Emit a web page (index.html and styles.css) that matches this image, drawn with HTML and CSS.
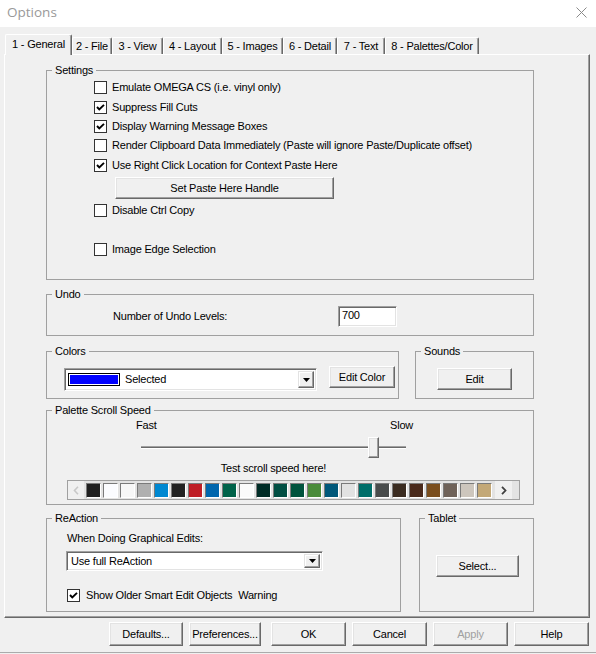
FILE: index.html
```html
<!DOCTYPE html>
<html>
<head>
<meta charset="utf-8">
<title>Options</title>
<link rel="stylesheet" href="styles.css">
</head>
<body>
<div class="window">
  <div class="titlebar">
    <span class="title">Options</span>
    <svg class="close" viewBox="0 0 11 11"><path d="M0.5 0.5 L10.5 10.5 M10.5 0.5 L0.5 10.5" stroke="#8a8a8a" stroke-width="1" fill="none"/></svg>
  </div>
  <div class="tabs">
    <div class="tab active">1 - General</div>
    <div class="tab">2 - File</div>
    <div class="tab">3 - View</div>
    <div class="tab">4 - Layout</div>
    <div class="tab">5 - Images</div>
    <div class="tab">6 - Detail</div>
    <div class="tab">7 - Text</div>
    <div class="tab">8 - Palettes/Color</div>
  </div>
  <div class="panel">
    <fieldset class="group settings">
      <legend>Settings</legend>
      <div class="settings-body">
        <div class="cb-row r1"><span class="cb"></span><span>Emulate OMEGA CS (i.e. vinyl only)</span></div>
        <div class="cb-row r2"><span class="cb"><svg viewBox="0 0 11 11"><path d="M2 5 L4.3 7.5 L9 2.8" stroke="#000" stroke-width="1.9" fill="none"/></svg></span><span>Suppress Fill Cuts</span></div>
        <div class="cb-row r3"><span class="cb"><svg viewBox="0 0 11 11"><path d="M2 5 L4.3 7.5 L9 2.8" stroke="#000" stroke-width="1.9" fill="none"/></svg></span><span>Display Warning Message Boxes</span></div>
        <div class="cb-row r4"><span class="cb"></span><span>Render Clipboard Data Immediately (Paste will ignore Paste/Duplicate offset)</span></div>
        <div class="cb-row r5"><span class="cb"><svg viewBox="0 0 11 11"><path d="M2 5 L4.3 7.5 L9 2.8" stroke="#000" stroke-width="1.9" fill="none"/></svg></span><span>Use Right Click Location for Context Paste Here</span></div>
        <button class="btn paste-btn">Set Paste Here Handle</button>
        <div class="cb-row r6"><span class="cb"></span><span>Disable Ctrl Copy</span></div>
        <div class="cb-row r7"><span class="cb"></span><span>Image Edge Selection</span></div>
      </div>
    </fieldset>

    <fieldset class="group undo">
      <legend>Undo</legend>
      <div class="undo-row">
        <span class="undo-label">Number of Undo Levels:</span>
        <div class="textbox">700</div>
      </div>
    </fieldset>

    <div class="group-row colors-row">
      <fieldset class="group colors">
        <legend>Colors</legend>
        <div class="colors-body">
          <div class="combo color-combo">
            <span class="sel-swatch"><span class="sel-fill"></span></span>
            <span class="combo-text">Selected</span>
            <span class="drop"><svg viewBox="0 0 7 4"><polygon points="0,0 7,0 3.5,4" fill="#000"/></svg></span>
          </div>
          <button class="btn edit-color">Edit Color</button>
        </div>
      </fieldset>
      <fieldset class="group sounds">
        <legend>Sounds</legend>
        <div class="sounds-body">
          <button class="btn edit-btn">Edit</button>
        </div>
      </fieldset>
    </div>

    <fieldset class="group palette">
      <legend>Palette Scroll Speed</legend>
      <div class="speed-labels"><span class="fast">Fast</span><span>Slow</span></div>
      <div class="slider"><div class="track"></div><div class="thumb"></div></div>
      <div class="test-text">Test scroll speed here!</div>
      <div class="strip">
        <span class="arrow left"><svg viewBox="0 0 6 9"><polyline points="5,0.8 1.5,4.5 5,8.2" stroke="#c8c8c8" stroke-width="1.6" fill="none"/></svg></span>
        <span class="sw" style="background:#202020"></span>
        <span class="sw" style="background:#fbfcff"></span>
        <span class="sw" style="background:#f7f7f7"></span>
        <span class="sw" style="background:#b0b0b0"></span>
        <span class="sw" style="background:#0088d1"></span>
        <span class="sw" style="background:#222222"></span>
        <span class="sw" style="background:#bf1e26"></span>
        <span class="sw" style="background:#0066ad"></span>
        <span class="sw" style="background:#00634a"></span>
        <span class="sw" style="background:#fafafa"></span>
        <span class="sw" style="background:#002c26"></span>
        <span class="sw" style="background:#004e42"></span>
        <span class="sw" style="background:#00533d"></span>
        <span class="sw" style="background:#4a8b3a"></span>
        <span class="sw" style="background:#00587a"></span>
        <span class="sw" style="background:#e2e2e2"></span>
        <span class="sw" style="background:#006e69"></span>
        <span class="sw" style="background:#494c4c"></span>
        <span class="sw" style="background:#3a2b20"></span>
        <span class="sw" style="background:#4a2a1c"></span>
        <span class="sw" style="background:#7a4e1e"></span>
        <span class="sw" style="background:#6f6259"></span>
        <span class="sw" style="background:#cdc6bd"></span>
        <span class="sw" style="background:#c3a877"></span>
        <span class="arrow right"><svg viewBox="0 0 6 9"><polyline points="1,0.8 4.5,4.5 1,8.2" stroke="#404040" stroke-width="1.8" fill="none"/></svg></span>
      </div>
    </fieldset>

    <div class="group-row reaction-row">
      <fieldset class="group reaction">
        <legend>ReAction</legend>
        <div class="reaction-body">
          <div class="reaction-label">When Doing Graphical Edits:</div>
          <div class="combo reaction-combo">
            <span class="combo-text">Use full ReAction</span>
            <span class="drop"><svg viewBox="0 0 7 4"><polygon points="0,0 7,0 3.5,4" fill="#000"/></svg></span>
          </div>
          <div class="cb-row warn-row"><span class="cb"><svg viewBox="0 0 11 11"><path d="M2 5 L4.3 7.5 L9 2.8" stroke="#000" stroke-width="1.9" fill="none"/></svg></span><span>Show Older Smart Edit Objects&nbsp; Warning</span></div>
        </div>
      </fieldset>
      <fieldset class="group tablet">
        <legend>Tablet</legend>
        <div class="tablet-body">
          <button class="btn select-btn">Select...</button>
        </div>
      </fieldset>
    </div>
  </div>
  <div class="buttons">
    <button class="btn b-defaults">Defaults...</button>
    <button class="btn b-prefs">Preferences...</button>
    <button class="btn b-ok">OK</button>
    <button class="btn b-cancel">Cancel</button>
    <button class="btn b-apply disabled">Apply</button>
    <button class="btn b-help">Help</button>
  </div>
</div>
</body>
</html>
```
FILE: styles.css
```css
* { box-sizing: border-box; }
html, body { margin: 0; padding: 0; }
body {
  width: 596px;
  height: 654px;
  overflow: hidden;
  background: #f0f0f0;
  font-family: "Liberation Sans", Arial, sans-serif;
  font-size: 11px;
  line-height: 13px;
  letter-spacing: -0.2px;
  color: #000;
}
.window {
  height: 653px;
  border-bottom: 1px solid #ababab;
  display: flex;
  flex-direction: column;
}
.titlebar {
  height: 27px;
  flex: none;
  background: #fff;
  display: flex;
  align-items: center;
  justify-content: space-between;
  padding: 0 9px 2px 7px;
}
.title {
  font-family: "Open Sans", sans-serif;
  font-size: 13.5px;
  letter-spacing: 0;
  color: #999;
}
.close { width: 11px; height: 11px; margin-top: 0; }

/* tabs */
.tabs {
  height: 27px;
  flex: none;
  display: flex;
  align-items: flex-end;
  padding-left: 5px;
}
.tab {
  height: 17px;
  display: flex;
  align-items: center;
  justify-content: center;
  white-space: nowrap;
  border-top: 1px solid #fff;
  border-left: 1px solid #fff;
  border-right: 1px solid #696969;
  box-shadow: inset -1px 0 #a0a0a0;
  border-radius: 2px 2px 0 0;
  background: #f0f0f0;
}
.tab.active {
  height: 21px;
  margin-bottom: -1px;
  position: relative;
  z-index: 1;
  padding-bottom: 1px;
}
.tab:nth-child(1) { width: 67px; }
.tab:nth-child(2) { width: 40px; }
.tab:nth-child(3) { width: 51px; }
.tab:nth-child(4) { width: 59px; }
.tab:nth-child(5) { width: 61px; }
.tab:nth-child(6) { width: 54px; }
.tab:nth-child(7) { width: 48px; }
.tab:nth-child(8) { width: 94px; }

/* panel */
.panel {
  margin-left: 4px;
  width: 586px;
  height: 564px;
  flex: none;
  border: 1px solid;
  border-color: #fff #696969 #696969 #fff;
  box-shadow: inset -1px -1px #a0a0a0;
  padding: 9px 55px 5px 41px;
  display: flex;
  flex-direction: column;
}

/* group boxes */
.group {
  margin: 0;
  padding: 0;
  min-width: 0;
  border: 1px solid #a0a0a0;
}
.group legend {
  padding: 0 3px;
  margin-left: 5px;
  line-height: 13px;
}
.group-row { display: flex; justify-content: space-between; }

.settings { height: 216px; }
.undo { height: 48px; margin-top: 8px; }
.colors-row { margin-top: 9px; }
.colors { width: 353px; height: 54px; }
.sounds { width: 119px; height: 54px; }
.palette { height: 101px; margin-top: 5px; }
.reaction-row { margin-top: 7px; }
.reaction { width: 355px; height: 100px; }
.tablet { width: 115px; height: 100px; }

/* checkboxes */
.cb-row { display: flex; align-items: center; gap: 5px; white-space: nowrap; }
.cb {
  width: 13px;
  height: 13px;
  flex: none;
  border: 1px solid #333;
  background: #fff;
  display: flex;
}
.cb svg { width: 11px; height: 11px; }

.settings-body { padding-left: 47px; display: flex; flex-direction: column; align-items: flex-start; }
.settings-body .r1, .settings-body .r2 { height: 20px; }
.settings-body .r3, .settings-body .r4 { height: 19px; }
.settings-body .r5 { height: 21px; }
.settings-body .r6 { height: 20px; margin-top: 1px; }
.settings-body .r7 { height: 20px; margin-top: 19px; }

/* buttons */
.btn {
  font: inherit;
  letter-spacing: inherit;
  color: #000;
  height: 22px;
  padding: 0;
  background: #f0f0f0;
  border: 1px solid;
  border-color: #fff #696969 #696969 #fff;
  box-shadow: inset -1px -1px #a0a0a0, inset 1px 1px #e3e3e3;
  display: flex;
  align-items: center;
  justify-content: center;
  white-space: nowrap;
}
.btn.disabled { color: #a0a0a0; }
.paste-btn { width: 219px; margin: 1px 0 0 21px; }

/* undo */
.undo-row { display: flex; align-items: center; padding: 5px 0 0 66px; }
.undo-label { width: 225px; }
.textbox {
  width: 59px;
  height: 21px;
  background: #fff;
  border: 1px solid;
  border-color: #a0a0a0 #fff #fff #a0a0a0;
  box-shadow: inset 1px 1px #696969, inset -1px -1px #e3e3e3;
  padding: 2px 0 0 3px;
}

/* combos */
.combo {
  display: flex;
  align-items: center;
  background: #fff;
  border: 1px solid;
  border-color: #a0a0a0 #fff #fff #a0a0a0;
  box-shadow: inset 1px 1px #696969, inset -1px -1px #e3e3e3;
  padding: 2px;
}
.drop {
  margin-left: auto;
  width: 16px;
  align-self: stretch;
  background: #f0f0f0;
  border: 1px solid;
  border-color: #e3e3e3 #696969 #696969 #e3e3e3;
  box-shadow: inset -1px -1px #a0a0a0, inset 1px 1px #fff;
  display: flex;
  align-items: center;
  justify-content: center;
}
.drop svg { width: 7px; height: 4px; }

.colors-body { display: flex; align-items: flex-start; padding: 8px 0 0 17px; }
.color-combo { width: 253px; height: 23px; margin-top: 2px; padding-left: 3px; }
.sel-swatch {
  width: 52px;
  height: 13px;
  border: 1px solid #000;
  padding: 1px;
  background: #fff;
  display: flex;
}
.sel-fill { flex: 1; background: #0000ff; }
.color-combo .combo-text { margin-left: 5px; }
.edit-color { width: 66px; margin-left: 12px; }

.sounds-body { display: flex; justify-content: center; padding-top: 10px; }
.edit-btn { width: 75px; }

/* palette scroll */
.speed-labels { display: flex; margin: 1px 0 0 89px; height: 14px; align-items: center; }
.fast { width: 254px; }
.slider { position: relative; margin: 5px 0 0 94px; width: 265px; height: 21px; }
.track {
  position: absolute;
  left: 0;
  right: 0;
  top: 9px;
  height: 3px;
  border-top: 1px solid #a0a0a0;
  border-bottom: 1px solid #fff;
  background: #696969;
}
.thumb {
  position: absolute;
  left: 227px;
  top: 0;
  width: 11px;
  height: 21px;
  background: #f0f0f0;
  border: 1px solid;
  border-color: #fff #696969 #696969 #fff;
  box-shadow: inset -1px -1px #a0a0a0, inset 1px 1px #e3e3e3;
}
.test-text { margin: 4px 0 0 94px; width: 265px; text-align: center; height: 13px; }
.strip {
  margin: 5px 0 0 20px;
  width: 453px;
  height: 20px;
  border: 1px solid #a0a0a0;
  background: #e3e3e3;
  display: flex;
  align-items: center;
}
.arrow {
  width: 16px;
  height: 18px;
  background: #f0f0f0;
  display: flex;
  align-items: center;
  justify-content: center;
  flex: none;
}
.arrow svg { width: 6px; height: 9px; }
.arrow.left { margin-right: 2px; }
.arrow.right { width: 17px; margin-left: 1px; }
.sw {
  width: 15px;
  height: 15px;
  flex: none;
  margin-right: 2px;
  border: 1px solid;
  border-color: #7a7a7a #fff #fff #7a7a7a;
}

/* reaction */
.reaction-body { padding: 7px 0 0 20px; }
.reaction-label { height: 13px; }
.reaction-combo { width: 257px; height: 20px; margin: 6px 0 0 -1px; padding-left: 4px; }
.warn-row { margin-top: 18px; height: 13px; gap: 6px; }

.tablet-body { display: flex; justify-content: center; padding: 30px 0 0 2px; }
.select-btn { width: 83px; }

/* bottom buttons */
.buttons {
  display: flex;
  justify-content: flex-end;
  padding: 4px 7px 0 0;
}
.buttons .btn { height: 24px; width: 75px; margin-left: 6px; }
.buttons .b-defaults { width: 74px; }
.buttons .b-prefs { width: 72px; }
.buttons .b-ok { margin-left: 10px; }
```
